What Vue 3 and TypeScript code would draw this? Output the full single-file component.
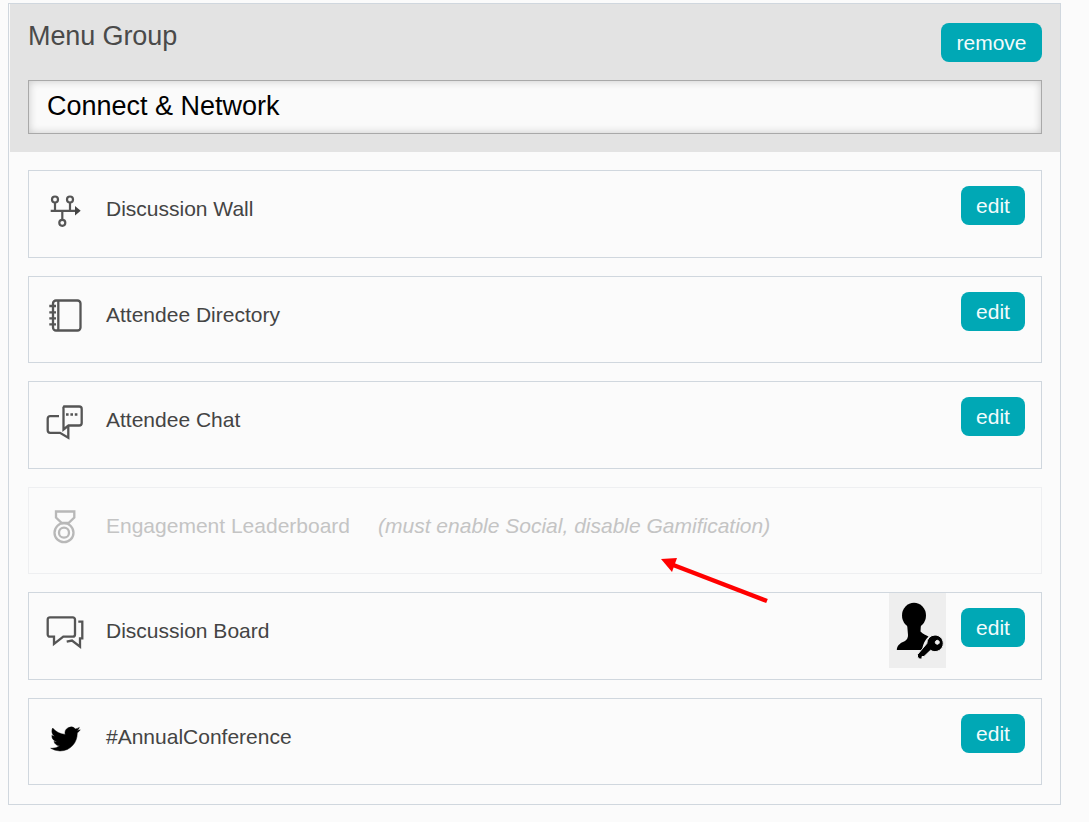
<script setup lang="ts">
interface MenuItem {
  id: string
  label: string
  icon: 'wall' | 'book' | 'chat' | 'medal' | 'board' | 'twitter'
  note?: string
  disabled?: boolean
  restricted?: boolean
}

const items: MenuItem[] = [
  { id: 'wall', label: 'Discussion Wall', icon: 'wall' },
  { id: 'directory', label: 'Attendee Directory', icon: 'book' },
  { id: 'chat', label: 'Attendee Chat', icon: 'chat' },
  {
    id: 'leaderboard',
    label: 'Engagement Leaderboard',
    icon: 'medal',
    note: '(must enable Social, disable Gamification)',
    disabled: true
  },
  { id: 'board', label: 'Discussion Board', icon: 'board', restricted: true },
  { id: 'twitter', label: '#AnnualConference', icon: 'twitter' }
]
</script>

<template>
  <div class="page">
    <section class="group">
      <header class="group-head">
        <div class="head-top">
          <h2 class="group-title">Menu Group</h2>
          <button class="btn btn-remove">remove</button>
        </div>
        <input class="name-input" value="Connect &amp; Network" />
      </header>

      <ul class="rows">
        <li v-for="item in items" :key="item.id" class="row" :class="{ disabled: item.disabled }">
          <svg class="icon" viewBox="0 0 40 40" fill="none" stroke="#555" stroke-width="2.2">
            <g v-if="item.icon === 'wall'">
              <circle cx="10" cy="5.500" r="3" />
              <circle cx="25" cy="5.500" r="3" />
              <circle cx="17.300" cy="28.800" r="3" />
              <path d="M10 8.500V16.800M25 8.500V16.800M17.300 16.800V25.800M5.700 16.800H31" />
              <path d="M30 12l5.700 4.800-5.700 4.800z" fill="#444" stroke="none" />
            </g>
            <g v-else-if="item.icon === 'book'" stroke-width="2.300">
              <rect x="8" y="1.500" width="27.500" height="30" rx="3" />
              <path d="M13.300 1.500V31.500M4.300 7H11M4.300 13.300H11M4.300 19.300H11M4.300 25.300H11" />
            </g>
            <g v-else-if="item.icon === 'chat'" stroke-width="2.300">
              <path d="M14 11.200H5.200a2.500 2.500 0 0 0-2.500 2.500V25.300a2.500 2.500 0 0 0 2.500 2.500H15l8.300 5V20.500" />
              <path d="M19 1.500H34.200a2.500 2.500 0 0 1 2.500 2.500V18a2.500 2.500 0 0 1-2.500 2.500H23.500l-5 4V4a2.500 2.500 0 0 1 .5-2.500z" />
              <path d="M21 9.500h2.600M25.400 9.500H28M29.800 9.500h2.600" stroke-width="2.600" />
            </g>
            <g v-else-if="item.icon === 'medal'" stroke-width="2.300">
              <path d="M11 1.500H29.300V7.500L23.500 13H16.800L11 7.500z" />
              <circle cx="19" cy="22.700" r="9.500" />
              <circle cx="19" cy="22.700" r="5" />
            </g>
            <g v-else-if="item.icon === 'board'" stroke-width="2.300">
              <path d="M5 1.300H27.800a2.200 2.200 0 0 1 2.200 2.200V18.500a2.200 2.200 0 0 1-2.200 2.200H18.300L9 28V20.700H5a2.200 2.200 0 0 1-2.300-2.200V3.500A2.200 2.200 0 0 1 5 1.300z" />
              <path d="M33.300 5.700H37.300V22.300H35V30.700L27 24.600L21.700 25.700" />
            </g>
            <path
              v-else
              transform="translate(5.700 3.200) scale(1.230)"
              fill="#000"
              stroke="#000"
              stroke-width="0.400"
              d="M23.953 4.570a10 10 0 01-2.825.775 4.958 4.958 0 002.163-2.723c-.951.555-2.005.959-3.127 1.184a4.920 4.920 0 00-8.384 4.482C7.690 8.095 4.067 6.130 1.640 3.162a4.822 4.822 0 00-.666 2.475c0 1.710.870 3.213 2.188 4.096a4.904 4.904 0 01-2.228-.616v.060a4.923 4.923 0 003.946 4.827 4.996 4.996 0 01-2.212.085 4.936 4.936 0 004.604 3.417 9.867 9.867 0 01-6.102 2.105c-.390 0-.779-.023-1.170-.067a13.995 13.995 0 007.557 2.209c9.053 0 13.998-7.496 13.998-13.985 0-.210 0-.420-.015-.630A9.935 9.935 0 0024 4.590z"
            />
          </svg>
          <span class="row-label">{{ item.label }}</span>
          <em v-if="item.note" class="row-note">{{ item.note }}</em>
          <div class="row-end">
            <div v-if="item.restricted" class="restricted">
              <svg viewBox="0 0 57 75" width="57" height="75">
                <ellipse cx="25" cy="22.500" rx="12" ry="12.800" />
                <path d="M18 30H32L31.500 38.500C34 41 37 42 39.500 43.500C36 47 34 51 33 57H7.800C8 53 10.500 50.500 14 49C17 47.800 19 46 19 42z" />
                <path
                  fill-rule="evenodd"
                  stroke="#eee"
                  stroke-width="1"
                  d="M46 42a8.300 8.300 0 1 1-4.500 15.300L35 63.500H33V66H30.500L28.500 64V61.500L37.800 50.500A8.300 8.300 0 0 1 46 42zM48.300 47.300a2 2 0 1 0 .01 0z"
                />
              </svg>
            </div>
            <button v-if="!item.disabled" class="btn btn-edit">edit</button>
          </div>
        </li>
      </ul>
    </section>

    <svg class="arrow" width="130" height="70" viewBox="650 540 130 70">
      <path d="M767 601L672 564.500" stroke="#f00" stroke-width="4.500" />
      <path d="M661 559L677 558 672 572z" fill="#f00" />
    </svg>
  </div>
</template>

<style scoped>
.page {
  position: relative;
  box-sizing: border-box;
  width: 1089px;
  height: 822px;
  padding: 3px 28px 0 8px;
  font-family: "Liberation Sans", Arial, sans-serif;
  color: #444;
}

.group {
  box-sizing: border-box;
  height: 802px;
  padding-left: 1px;
  border: 1px solid #d0d7de;
}

.group-head {
  box-sizing: border-box;
  height: 148px;
  padding: 19px 18px 0;
  background: #e3e3e3;
}

.head-top {
  display: flex;
  justify-content: space-between;
  align-items: flex-start;
  height: 57px;
}

.group-title {
  margin: -3px 0 0;
  font-size: 27px;
  font-weight: 400;
  line-height: 32px;
  letter-spacing: -0.1px;
  color: #4a4a4a;
}

.btn {
  border: 0;
  border-radius: 8px;
  background: #00a8b5;
  color: #f2fbfc;
  font-family: inherit;
  font-size: 21px;
  line-height: 39px;
  height: 39px;
  padding: 0;
}

.btn-remove {
  width: 101px;
}

.btn-edit {
  width: 64px;
}

.name-input {
  box-sizing: border-box;
  display: block;
  width: 100%;
  height: 54px;
  padding: 0 18px 2px;
  border: 1px solid #a9a9a9;
  background: #fafafa;
  box-shadow: inset 0 0 8px rgba(0, 0, 0, 0.2);
  font-family: inherit;
  font-size: 27px;
  color: #000;
  outline: none;
}

.rows {
  display: flex;
  flex-direction: column;
  gap: 18px;
  margin: 0;
  padding: 18px 18px 0;
  list-style: none;
}

.row {
  box-sizing: border-box;
  display: flex;
  align-items: center;
  height: 87.500px;
  padding: 0 16px;
  border: 1px solid #d0d7de;
}

.row.disabled {
  border-color: #eeeff1;
}

.icon {
  flex: none;
  width: 40px;
  height: 40px;
  margin-right: 21px;
}

.row-label {
  margin-bottom: 9px;
  font-size: 21px;
  color: #444;
}

.row-note {
  margin-bottom: 9px;
  margin-left: 28px;
  font-size: 21px;
  color: #c4c4c4;
}

.row.disabled .row-label {
  color: #c4c4c4;
}

.row.disabled .icon {
  opacity: 0.4;
}

.row-end {
  display: flex;
  align-items: flex-start;
  align-self: stretch;
  margin-left: auto;
  padding-top: 15px;
}

.restricted {
  width: 57px;
  height: 75px;
  margin-top: -15px;
  margin-right: 15px;
  background: #eee;
}

.arrow {
  position: absolute;
  left: 650px;
  top: 540px;
}
</style>

<style>
body {
  background: #fbfbfb;
}
</style>
